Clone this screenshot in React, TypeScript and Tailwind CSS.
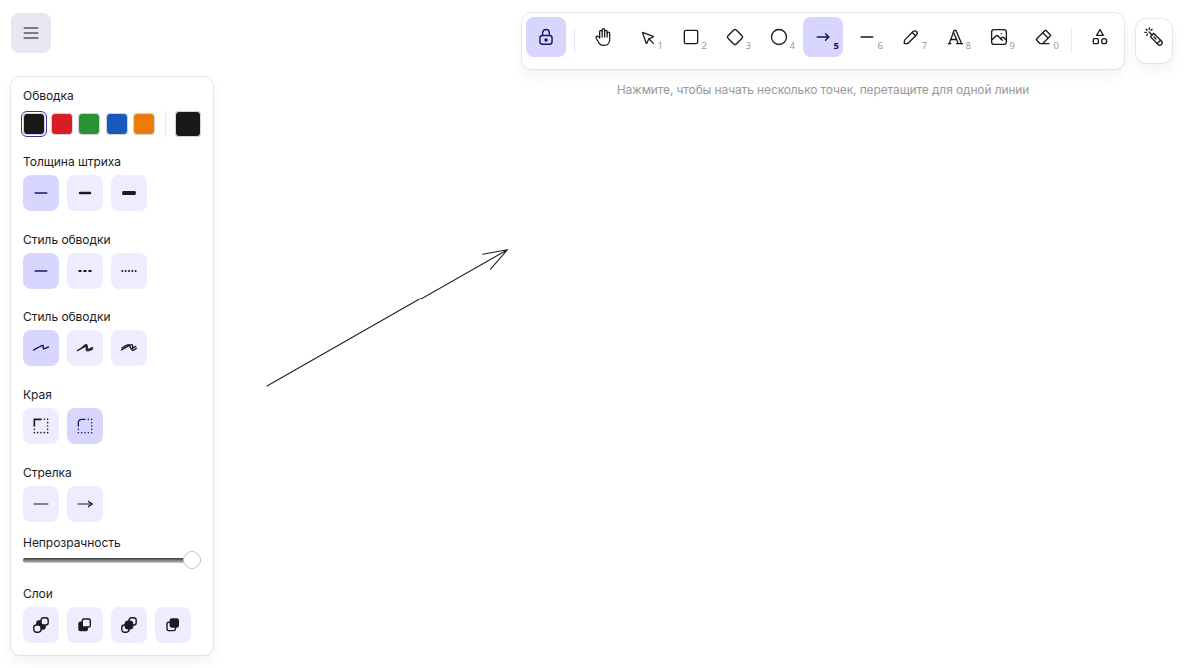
import type { ReactNode } from "react";

type IconProps = { children: ReactNode; box?: string; stroke?: number; size?: string };

function Icon({ children, box = "0 0 20 20", stroke = 1.25, size = "h-5 w-5" }: IconProps) {
  return (
    <svg
      viewBox={box}
      className={`${size} shrink-0`}
      fill="none"
      stroke="currentColor"
      strokeWidth={stroke}
      strokeLinecap="round"
      strokeLinejoin="round"
    >
      {children}
    </svg>
  );
}

const BOX24 = "0 0 24 24";

const lockIcon = (
  <Icon stroke={1.4}>
    <path d="M13.542 8.542H6.458a2.5 2.5 0 0 0-2.5 2.5v3.75a2.5 2.5 0 0 0 2.5 2.5h7.084a2.5 2.5 0 0 0 2.5-2.5v-3.75a2.5 2.5 0 0 0-2.5-2.5Z" />
    <path d="M10 13.958a1.042 1.042 0 1 0 0-2.083 1.042 1.042 0 0 0 0 2.083Z" fill="currentColor" />
    <path d="M6.667 8.333V5.417C6.667 3.806 8.159 2.5 10 2.5c1.841 0 3.333 1.306 3.333 2.917v2.916" />
  </Icon>
);

const handIcon = (
  <Icon box={BOX24} stroke={1.5}>
    <path d="M8 13v-7.5a1.5 1.5 0 0 1 3 0v6.5" />
    <path d="M11 5.5v-2a1.5 1.5 0 1 1 3 0v8.5" />
    <path d="M14 5.5a1.5 1.5 0 0 1 3 0v6.5" />
    <path d="M17 7.5a1.5 1.5 0 0 1 3 0v8.5a6 6 0 0 1 -6 6h-2h.208a6 6 0 0 1 -5.012 -2.7a69.74 69.74 0 0 1 -.196 -.3c-.312 -.479 -1.407 -2.388 -3.286 -5.728a1.5 1.5 0 0 1 .536 -2.022a1.867 1.867 0 0 1 2.28 .28l1.47 1.47" />
  </Icon>
);

const tools: { key: string; icon: ReactNode; active?: boolean }[] = [
  {
    key: "1",
    icon: (
      <Icon box="0 0 22 22" stroke={1.4}>
        <path d="M6 6l4.153 11.793a0.365 .365 0 0 0 .331 .207a0.366 .366 0 0 0 .332 -.207l2.184 -4.793l4.787 -1.994a0.355 .355 0 0 0 .213 -.323a0.355 .355 0 0 0 -.213 -.323l-11.787 -4.36z" />
        <path d="M13.5 13.5l4.5 4.5" />
      </Icon>
    ),
  },
  {
    key: "2",
    icon: (
      <Icon box={BOX24} stroke={1.6}>
        <rect x="4" y="4" width="16" height="16" rx="2" />
      </Icon>
    ),
  },
  {
    key: "3",
    icon: (
      <Icon box={BOX24} stroke={1.6}>
        <path d="M10.5 20.4l-6.9 -6.9c-.781 -.781 -.781 -2.219 0 -3l6.9 -6.9c.781 -.781 2.219 -.781 3 0l6.9 6.9c.781 .781 .781 2.219 0 3l-6.9 6.9c-.781 .781 -2.219 .781 -3 0z" />
      </Icon>
    ),
  },
  {
    key: "4",
    icon: (
      <Icon box={BOX24} stroke={1.6}>
        <circle cx="12" cy="12" r="9" />
      </Icon>
    ),
  },
  {
    key: "5",
    active: true,
    icon: (
      <Icon box={BOX24} stroke={1.7}>
        <path d="M5 12h14M15 16l4-4M15 8l4 4" />
      </Icon>
    ),
  },
  {
    key: "6",
    icon: (
      <Icon stroke={1.5}>
        <path d="M4.167 10h11.666" />
      </Icon>
    ),
  },
  {
    key: "7",
    icon: (
      <Icon stroke={1.35}>
        <path d="m7.643 15.69 7.774-7.773a2.357 2.357 0 1 0-3.334-3.334L4.31 12.357a3.333 3.333 0 0 0-.977 2.357v1.953h1.953c.884 0 1.732-.352 2.357-.977Z" />
        <path d="m11.25 5.417 3.333 3.333" />
      </Icon>
    ),
  },
  {
    key: "8",
    icon: (
      <Icon box={BOX24} stroke={1.6}>
        <path d="M4 20h3M14 20h7M6.9 15h6.9M10.2 6.3L16 20" />
        <path d="M5 20L11 4h2l7 16" />
      </Icon>
    ),
  },
  {
    key: "9",
    icon: (
      <Icon stroke={1.35}>
        <path d="M12.5 6.667h.01" />
        <path d="M4.91 2.625h10.18a2.284 2.284 0 0 1 2.285 2.284v10.182a2.284 2.284 0 0 1-2.284 2.284H4.909a2.284 2.284 0 0 1-2.284-2.284V4.909a2.284 2.284 0 0 1 2.284-2.284Z" />
        <path d="m3.333 12.5 3.334-3.333c.773-.745 1.726-.745 2.5 0l4.166 4.166" />
        <path d="m11.667 11.667.833-.834c.774-.744 1.726-.744 2.5 0l1.667 1.667" />
      </Icon>
    ),
  },
  {
    key: "0",
    icon: (
      <Icon box={BOX24} stroke={1.6}>
        <path d="M19 20h-10.5l-4.21 -4.3a1 1 0 0 1 0 -1.41l10 -10a1 1 0 0 1 1.41 0l5 5a1 1 0 0 1 0 1.41l-9.2 9.3" />
        <path d="M18 13.3l-6.3 -6.3" />
      </Icon>
    ),
  },
];

const shapesIcon = (
  <Icon box={BOX24} stroke={1.6}>
    <path d="M12 3l-4 7h8z" />
    <circle cx="17" cy="17" r="3" />
    <rect x="4" y="14" width="6" height="6" rx="1" />
  </Icon>
);

const laserIcon = (
  <Icon stroke={1.35}>
    <g transform="rotate(90 10 10)">
      <path d="m9.644 13.69 7.774-7.773a2.357 2.357 0 0 0-3.334-3.334l-7.773 7.774L8 12l1.643 1.69Z" />
      <path d="m13.25 3.417 3.333 3.333M10 10l2-2M5 15l3-3M2.156 17.894l1-1M5.453 19.029l-.144-1.407M2.377 11.887l.866 1.118M8.354 17.273l-1.194-.758M.953 14.652l1.408.13" />
    </g>
  </Icon>
);

const widthIcons = [
  <Icon stroke={1.5}><path d="M4.167 10h11.666" /></Icon>,
  <Icon stroke={2.5}><path d="M5 10h10" /></Icon>,
  <Icon stroke={0}><rect x="3.2" y="8" width="13.6" height="4" rx="1.2" fill="currentColor" /></Icon>,
];

const styleIcons = [
  <Icon stroke={1.5}><path d="M4.167 10h11.666" /></Icon>,
  <Icon box={BOX24} stroke={2.2}><path d="M5 12h2M11 12h2M17 12h2" /></Icon>,
  <Icon box={BOX24} stroke={2.4}><path d="M4 12v.01M8 12v.01M12 12v.01M16 12v.01M20 12v.01" /></Icon>,
];

const sloppinessIcons = [
  <Icon stroke={1.4}>
    <path d="M2.5 12.038c1.655-.885 5.9-3.292 8.568-4.354 2.668-1.063.101 2.821 1.32 3.104 1.218.283 5.112-1.814 5.112-1.814" />
  </Icon>,
  <Icon stroke={1.35}>
    <path d="M2.5 12.563c1.655-.886 5.9-3.293 8.568-4.355 2.668-1.062.101 2.822 1.32 3.105 1.218.283 5.112-1.814 5.112-1.814m-13.469 2.23c2.963-1.586 6.13-5.62 7.468-4.998 1.338.623-1.153 4.11-.132 5.595 1.02 1.487 6.133-1.43 6.133-1.43" />
  </Icon>,
  <Icon stroke={1.35}>
    <path d="M2.5 11.936c1.737-.879 8.627-5.346 10.42-5.268 1.795.078-.418 5.138.345 5.736.763.598 3.53-1.789 4.235-2.147M2.929 9.788c1.164-.519 5.47-3.28 6.987-3.114 1.519.165 1 3.827 2.121 4.109 1.122.281 3.839-2.016 4.606-2.42" />
  </Icon>,
];

const edgeIcons = [
  <Icon stroke={1.65}>
    <path d="M3.333 10V3.333H10" />
    <path d="M13.333 3.333v.01M16.667 3.333v.01M16.667 6.667v.01M16.667 10v.01M3.333 13.333v.01M16.667 13.333v.01M3.333 16.667v.01M6.667 16.667v.01M10 16.667v.01M13.333 16.667v.01M16.667 16.667v.01" />
  </Icon>,
  <Icon box={BOX24} stroke={1.9}>
    <path d="M4 12v-4a4 4 0 0 1 4 -4h4" strokeWidth="1.6" />
    <path d="M16 4v.01M20 4v.01M20 8v.01M20 12v.01M4 16v.01M20 16v.01M4 20v.01M8 20v.01M12 20v.01M16 20v.01M20 20v.01" />
  </Icon>,
];

const arrowheadIcons = [
  <Icon box="0 0 40 20" stroke={2} size="h-[10px] w-5"><path d="M6 10h28" /></Icon>,
  <Icon box="0 0 40 20" stroke={2} size="h-[10px] w-5">
    <path d="M34 10H6" />
    <path d="M34 10L27 5M34 10L27 15" strokeWidth="3" />
  </Icon>,
];

const layerIcons = [
  <Icon box="0 0 16 16" size="h-4 w-4" stroke={1.4}>
    <rect x="3.9" y="3.9" width="8.2" height="8.2" rx="2" fill="currentColor" />
    <rect x="8" y="0.8" width="7.2" height="7.2" rx="2.6" className="fill-[#eeecff]" />
    <rect x="0.8" y="8" width="7.2" height="7.2" rx="2.6" className="fill-[#eeecff]" />
  </Icon>,
  <Icon box="0 0 16 16" size="h-4 w-4" stroke={1.4}>
    <rect x="2" y="5.2" width="8.4" height="8.4" rx="1.5" fill="currentColor" />
    <rect x="5.3" y="2" width="8" height="8" rx="1.6" className="fill-[#eeecff]" />
  </Icon>,
  <Icon box="0 0 16 16" size="h-4 w-4" stroke={1.4}>
    <rect x="8" y="0.8" width="7.2" height="7.2" rx="2.6" />
    <rect x="0.8" y="8" width="7.2" height="7.2" rx="2.6" />
    <rect x="4.3" y="4.3" width="7.4" height="7.4" rx="2.8" fill="currentColor" />
  </Icon>,
  <Icon box="0 0 16 16" size="h-4 w-4" stroke={1.4}>
    <rect x="2" y="5.2" width="8.4" height="8.4" rx="1.5" />
    <rect x="5.3" y="2" width="8" height="8" rx="1.6" fill="currentColor" />
  </Icon>,
];

function Label({ children }: { children: ReactNode }) {
  return <h3 className="h-5 text-[12px] leading-5 tracking-[-0.04px] whitespace-nowrap">{children}</h3>;
}

type OptionsProps = { label: string; icons: ReactNode[]; selected?: number; height: string };

function Options({ label, icons, selected, height }: OptionsProps) {
  return (
    <section className={height}>
      <Label>{label}</Label>
      <div className="mt-[3px] flex gap-2">
        {icons.map((icon, i) => (
          <button
            key={i}
            className={`flex h-9 w-9 items-center justify-center rounded-lg ${
              i === selected ? "bg-[#d8d5ff] text-[#1e1163]" : "bg-[#eeecff] text-[#1b1b1f]"
            }`}
          >
            {icon}
          </button>
        ))}
      </div>
    </section>
  );
}

const swatches = ["bg-[#181818]", "bg-[#d91c26]", "bg-[#2a9134]", "bg-[#185abc]", "bg-[#ec7c06]"];

function StylePanel() {
  return (
    <aside className="mt-6 h-[578px] w-[202px] rounded-[9px] bg-white px-3 pt-[9px] shadow-[0_0_0_1px_rgba(0,0,0,0.05),0_0_3px_rgba(0,0,0,0.08),0_7px_14px_rgba(0,0,0,0.05)]">
      <section className="h-[66px]">
        <Label>Обводка</Label>
        <div className="mt-[5px] flex h-[26px] items-center">
          <div className="flex gap-[5.5px]">
            {swatches.map((color, i) => (
              <button
                key={color}
                className={`h-[22px] w-[22px] rounded-[4px] border border-[#d4d4d4] ${color} ${
                  i === 0 ? "outline-[1.3px] outline-offset-1 outline-[#4030a0]" : ""
                }`}
              />
            ))}
          </div>
          <div className="ml-[10px] h-[26px] w-px bg-[#e8e6f6]" />
          <button className="ml-[9px] h-[26px] w-[26px] rounded-[4px] border border-[#d4d4d4] bg-[#181818]" />
        </div>
      </section>
      <Options label="Толщина штриха" icons={widthIcons} selected={0} height="h-[78px]" />
      <Options label="Стиль обводки" icons={styleIcons} selected={0} height="h-[77px]" />
      <Options label="Стиль обводки" icons={sloppinessIcons} selected={0} height="h-[78px]" />
      <Options label="Края" icons={edgeIcons} selected={1} height="h-[78px]" />
      <Options label="Стрелка" icons={arrowheadIcons} height="h-[70px]" />
      <section className="h-[51px]">
        <Label>Непрозрачность</Label>
        <div className="mt-[5px] flex h-[5px] w-[178px] items-center justify-end rounded-[2px] bg-linear-to-b from-[#3c3c3c] to-[#cfcfcf]">
          <div className="mb-px h-[18px] w-[18px] shrink-0 rounded-full border border-[#c4c4c4] bg-white" />
        </div>
      </section>
      <Options label="Слои" icons={layerIcons} height="h-[60px]" />
    </aside>
  );
}

function Toolbar() {
  return (
    <div className="flex h-14 w-[602px] rounded-[9px] bg-white p-1 shadow-[0_0_0_1px_rgba(0,0,0,0.05),0_0_3px_rgba(0,0,0,0.08),0_7px_14px_rgba(0,0,0,0.05)]">
      <button className="flex h-10 w-10 items-center justify-center rounded-lg bg-[#d8d5ff] text-[#1e1163]">
        {lockIcon}
      </button>
      <div className="mt-3 ml-2 h-6 w-px bg-[#e8e6fb]" />
      <button className="ml-2 flex h-10 w-10 items-center justify-center">{handIcon}</button>
      <div className="ml-1 flex gap-1">
        {tools.map((tool) => (
          <button
            key={tool.key}
            className={`relative flex h-10 w-10 items-center justify-center rounded-lg ${
              tool.active ? "bg-[#d8d5ff] text-[#1e1163]" : ""
            }`}
          >
            {tool.icon}
            <span
              className={`absolute right-1 bottom-[6px] font-['Noto_Sans',sans-serif] text-[9.5px] leading-[11px] ${
                tool.active ? "font-bold" : "text-[#999999]"
              }`}
            >
              {tool.key}
            </span>
          </button>
        ))}
      </div>
      <div className="mt-3 ml-2 h-6 w-px bg-[#e8e6fb]" />
      <button className="ml-2 flex h-10 w-10 items-center justify-center">{shapesIcon}</button>
    </div>
  );
}

export default function App() {
  return (
    <div className="relative flex h-[668px] w-[1194px] overflow-hidden bg-white pt-[13px] pl-[11px] font-['Inter',sans-serif] text-[#1b1b1f]">
      <svg
        className="absolute top-0 left-0 h-full w-full"
        viewBox="0 0 1194 668"
        fill="none"
        stroke="#1e1e1e"
        strokeWidth="1.1"
        strokeLinecap="round"
      >
        <path d="M267 386L419 299.2M420.3 298.7L422 298.5L507 250M482.5 254.2L507.5 249.7M490.5 269.2L507.5 249.7" />
      </svg>
      <div className="relative w-[202px] shrink-0">
        <button className="flex h-10 w-10 items-center justify-center rounded-lg bg-[#e8e6f1] text-[#5b5566]">
          <Icon box={BOX24} stroke={2}>
            <path d="M4 6h16M4 12h16M4 18h16" />
          </Icon>
        </button>
        <StylePanel />
      </div>
      <div className="relative ml-[309px] shrink-0">
        <div className="flex">
          <Toolbar />
          <button className="mt-[6px] ml-3 flex h-11 w-9 items-start justify-center rounded-[10px] bg-white pt-2 shadow-[0_0_0_1px_rgba(0,0,0,0.05),0_0_3px_rgba(0,0,0,0.08),0_7px_14px_rgba(0,0,0,0.05)]">
            {laserIcon}
          </button>
        </div>
        <p className="mt-[11px] w-[602px] text-center text-[12px] leading-5 tracking-[-0.125px] whitespace-nowrap text-[#999999]">
          Нажмите, чтобы начать несколько точек, перетащите для одной линии
        </p>
      </div>
    </div>
  );
}
